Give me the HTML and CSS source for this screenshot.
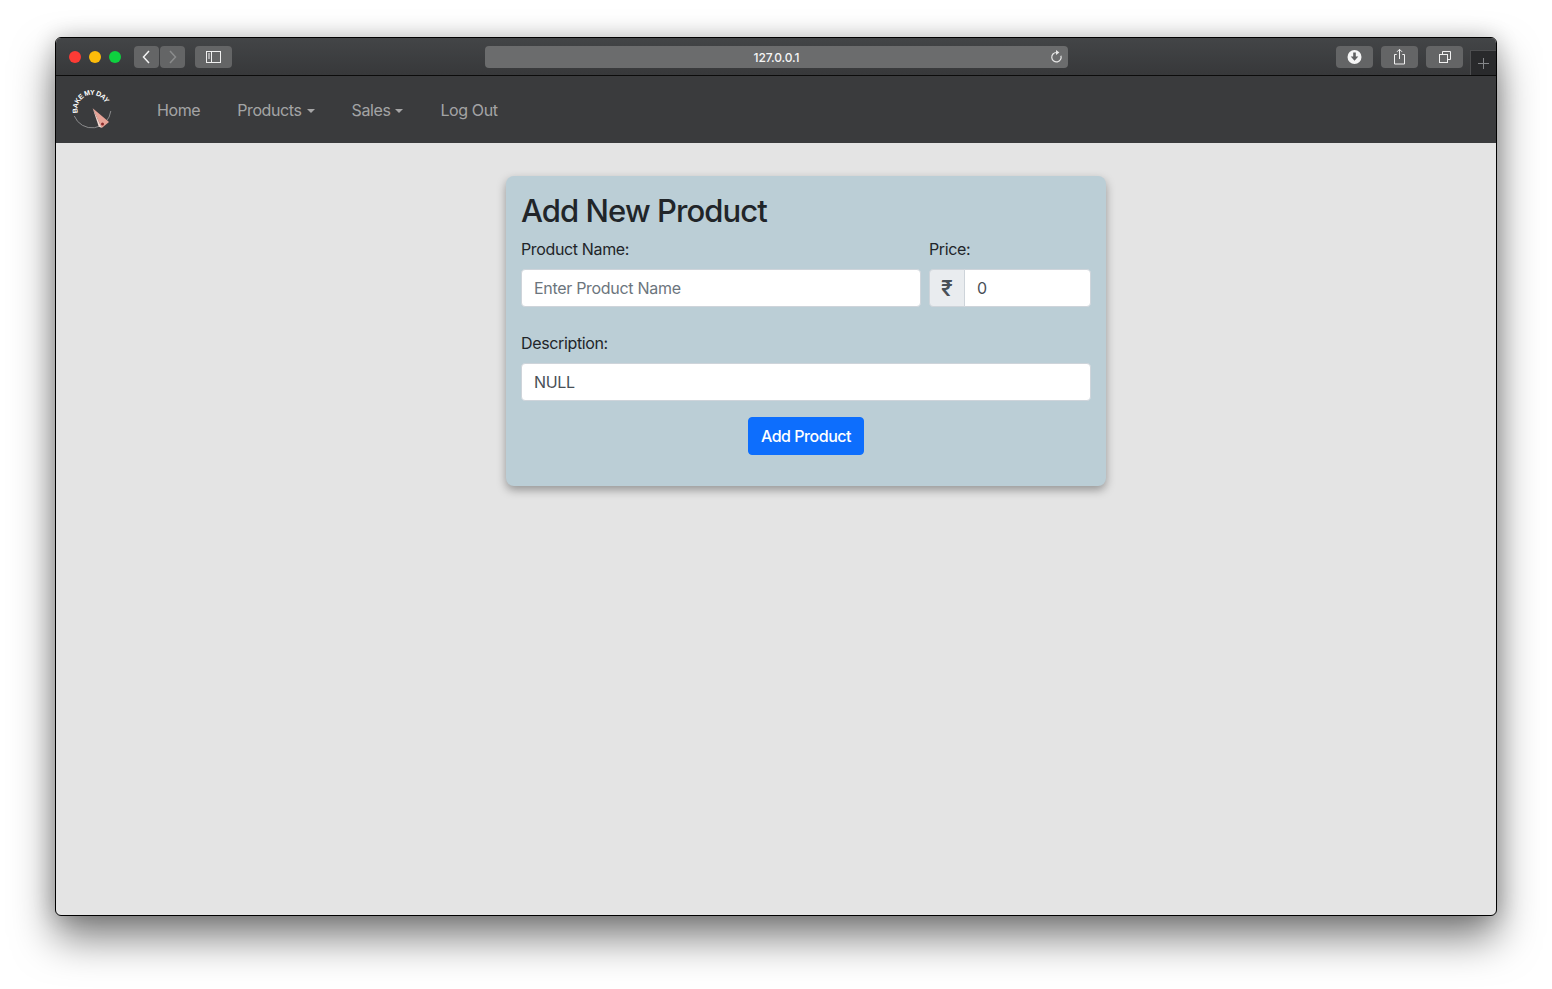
FILE: index.html
```html
<!DOCTYPE html>
<html lang="en">
<head>
<meta charset="utf-8">
<title>Add New Product</title>
<link rel="stylesheet" href="styles.css">
</head>
<body>
<div class="window">
  <header class="toolbar">
    <div class="lights"><span class="light red"></span><span class="light yellow"></span><span class="light green"></span></div>
    <div class="navpair">
      <span class="tbtn nav-btn"><svg width="25" height="22" viewBox="0 0 25 22"><path d="M15 5l-5.500 6 5.500 6" fill="none" stroke="#f2f2f2" stroke-width="1.500"/></svg></span>
      <span class="tbtn nav-btn"><svg width="25" height="22" viewBox="0 0 25 22"><path d="M10 5l5.500 6-5.500 6" fill="none" stroke="#8b8c8d" stroke-width="1.500"/></svg></span>
    </div>
    <span class="tbtn wide sidebar-btn"><svg width="37" height="22" viewBox="0 0 37 22"><rect x="11.500" y="5.500" width="14" height="11" fill="none" stroke="#f0f0f0"/><path d="M16.500 5.500v11" stroke="#f0f0f0"/><path d="M13 8h2M13 10h2M13 12h2" stroke="#f0f0f0"/></svg></span>
    <div class="address"><span class="url">127.0.0.1</span>
      <svg class="reload" width="14" height="14" viewBox="0 0 14 14"><path d="M7.500 2.500a4.700 4.700 0 1 0 4.400 3.200" fill="none" stroke="#e6e6e6" stroke-width="1.200"/><path d="M7 0v5l3.400-2.500z" fill="#e6e6e6"/></svg>
    </div>
    <div class="actions">
      <span class="tbtn wide"><svg width="37" height="22" viewBox="0 0 37 22"><circle cx="18.500" cy="11" r="7" fill="#f5f5f5"/><path d="M17.200 6.500h2.600v4h2.500l-3.800 4.200-3.800-4.200h2.500z" fill="#5f6061"/></svg></span>
      <span class="tbtn wide"><svg width="37" height="22" viewBox="0 0 37 22"><path d="M15.700 8.500h-2.200v9.500h10v-9.500h-2.200" fill="none" stroke="#f0f0f0"/><path d="M18.500 13V3.500M16 5.800l2.500-2.500 2.500 2.500" fill="none" stroke="#f0f0f0"/></svg></span>
      <span class="tbtn wide"><svg width="37" height="22" viewBox="0 0 37 22"><rect x="13.500" y="8.500" width="8" height="8" fill="none" stroke="#f0f0f0"/><path d="M16.500 8V5.500h8v8H22" fill="none" stroke="#f0f0f0"/></svg></span>
    </div>
    <span class="newtab"><svg width="13" height="13" viewBox="0 0 13 13"><path d="M6.500 1v11M1 6.500h11" stroke="#85878a" stroke-width="1"/></svg></span>
  </header>
  <nav class="navbar">
    <svg class="logo" width="42" height="42" viewBox="0 0 42 42">
      <defs><path id="ring" d="M7 25A14.500 14.500 0 1 1 35.500 21"/></defs>
      <path d="M39.800 23a19 19 0 0 1-36.500 5" fill="none" stroke="#a0a0a1" stroke-width="0.800"/>
      <text class="logo-text"><textPath href="#ring" textLength="43" lengthAdjust="spacing">BAKE MY DAY</textPath></text>
      <path d="M21.700 20.300L38 34l-7.300 6z" fill="#e8a397"/>
      <path d="M21.700 20.300L30.700 40l-3-1.500z" fill="#f6dad3"/>
      <circle cx="31.500" cy="36" r="1.500" fill="#8c2a2a"/>
    </svg>
    <ul class="menu">
      <li class="menu-item">Home</li>
      <li class="menu-item caret">Products</li>
      <li class="menu-item caret">Sales</li>
      <li class="menu-item">Log Out</li>
    </ul>
  </nav>
  <main class="content">
    <form class="card">
      <h2 class="title">Add New Product</h2>
      <div class="row">
        <div class="field name-field">
          <label class="label">Product Name:</label>
          <input class="control" type="text" placeholder="Enter Product Name">
        </div>
        <div class="field price-field">
          <label class="label">Price:</label>
          <div class="group">
            <span class="addon">₹</span>
            <input class="control group-input" type="text" value="0">
          </div>
        </div>
      </div>
      <div class="field">
        <label class="label">Description:</label>
        <input class="control" type="text" value="NULL">
      </div>
      <div class="submit-row"><button class="submit" type="button">Add Product</button></div>
    </form>
  </main>
</div>
</body>
</html>
```
FILE: styles.css
```css
* { box-sizing: border-box; }
html, body { height: 100%; }
body {
  margin: 0;
  padding: 37px 55px 73px;
  background: #fff;
  font-family: Inter, "Liberation Sans", sans-serif;
  font-size: 16px;
  color: #212529;
  overflow: hidden;
}
.window {
  height: 879px;
  display: flex;
  flex-direction: column;
  border: 1px solid #000;
  border-radius: 6px;
  overflow: hidden;
  box-shadow: 0 22px 42px rgba(0, 0, 0, 0.5), 0 0 22px rgba(0, 0, 0, 0.2);
  background: #e4e4e4;
}
.toolbar {
  height: 38px;
  flex: none;
  display: flex;
  align-items: flex-start;
  padding: 8px 0 0 13px;
  background: linear-gradient(#434547, #37383a);
  border-bottom: 1px solid #0c0c0c;
}
.lights { display: flex; gap: 8px; margin-top: 5px; }
.light { width: 12px; height: 12px; border-radius: 50%; }
.red { background: #fd3b35; }
.yellow { background: #fdbc0a; }
.green { background: #0ed13f; }
.navpair { display: flex; gap: 1px; margin-left: 13px; }
.tbtn {
  height: 22px;
  display: block;
  background: #646566;
  border-radius: 4px;
}
.tbtn svg { display: block; }
.nav-btn { width: 25px; }
.wide { width: 37px; }
.sidebar-btn { margin-left: 10px; }
.address {
  position: relative;
  width: 584px;
  height: 22px;
  margin-left: 253px;
  display: flex;
  align-items: center;
  justify-content: center;
  background: #6b6c6d;
  border-radius: 4px;
  color: #f5f5f5;
  font-size: 12px;
  font-weight: 500;
  letter-spacing: -0.1px;
}
.url { position: relative; }
.reload { position: absolute; right: 5px; top: 4px; }
.actions { display: flex; gap: 8px; margin-left: 268px; }
.newtab {
  width: 26px;
  height: 25px;
  margin: 4px 0 0 7px;
  display: flex;
  align-items: center;
  justify-content: center;
  background: #292a2c;
  border-left: 1px solid #4d4e50;
  border-top: 1px solid #4d4e50;
}
.navbar {
  height: 67px;
  flex: none;
  display: flex;
  align-items: center;
  padding-left: 15px;
  background: #3a3b3d;
}
.logo { flex: none; margin-top: -1px; }
.logo-text {
  font-family: "Liberation Sans", sans-serif;
  font-size: 7px;
  font-weight: 700;
  fill: #fff;
}
.menu {
  display: flex;
  list-style: none;
  margin: 0 0 0 44px;
  padding: 0;
  gap: 37px;
  color: rgba(255, 255, 255, 0.55);
  letter-spacing: -0.4px;
}
.caret::after {
  content: "";
  display: inline-block;
  margin-left: 5px;
  vertical-align: 3px;
  border-top: 4px solid;
  border-left: 4px solid transparent;
  border-right: 4px solid transparent;
}
.content { flex: 1; display: flex; justify-content: center; align-items: flex-start; padding: 33px 0 0 60px; }
.card {
  width: 600px;
  height: 310px;
  padding: 16px 15px 15px;
  background: #bbced6;
  border-radius: 8px;
  box-shadow: 0 4px 10px rgba(0, 0, 0, 0.35);
}
.title {
  margin: 0 0 7px;
  font-size: 31px;
  font-weight: 500;
  line-height: 38px;
  letter-spacing: -0.93px;
}
.row { display: flex; gap: 8px; margin-bottom: 8px; }
.field { margin-bottom: 16px; }
.name-field { width: 400px; }
.price-field { flex: 1; }
.label { display: block; margin-bottom: 8px; line-height: 24px; height: 24px; letter-spacing: -0.36px; }
.control {
  display: block;
  width: 100%;
  height: 38px;
  padding: 6px 12px;
  font: inherit;
  letter-spacing: -0.3px;
  color: #495057;
  background: #fff;
  border: 1px solid #ced4da;
  border-radius: 4px;
  outline: none;
}
.control::placeholder { color: #6c757d; opacity: 1; }
.group { display: flex; }
.addon {
  width: 36px;
  height: 38px;
  flex: none;
  display: flex;
  align-items: center;
  justify-content: center;
  background: #e9ecef;
  border: 1px solid #ced4da;
  border-radius: 4px 0 0 4px;
  color: #495057;
  font-size: 21px;
  font-weight: 600;
}
.group-input { flex: 1; min-width: 0; margin-left: -1px; border-radius: 0 4px 4px 0; }
.submit-row { display: flex; justify-content: center; }
.submit {
  height: 38px;
  padding: 0 12px;
  font: inherit;
  font-weight: 500;
  letter-spacing: -0.47px;
  color: #fff;
  background: #0d6efd;
  border: 1px solid #0d6efd;
  border-radius: 4px;
}
```
